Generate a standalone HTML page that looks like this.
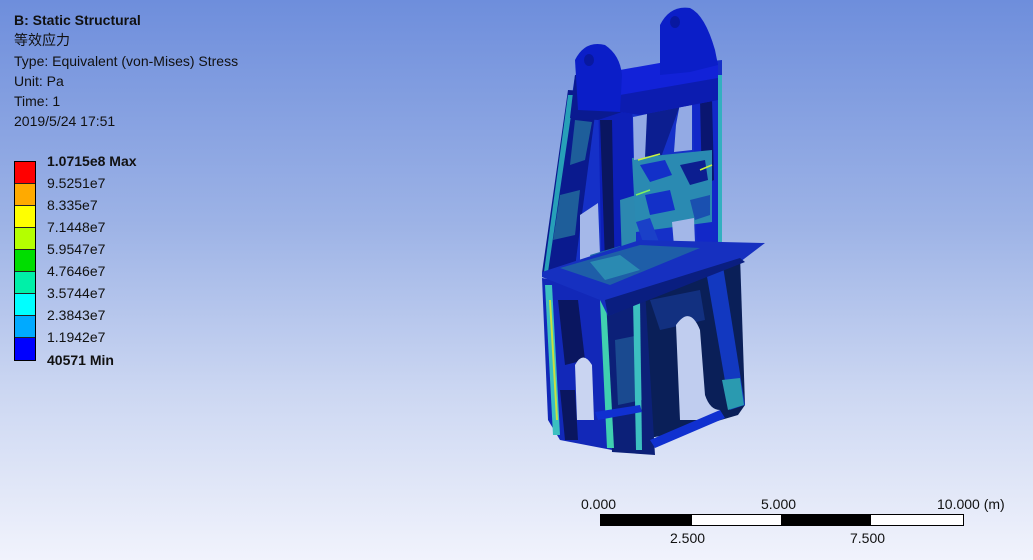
<!DOCTYPE html>
<html><head><meta charset="utf-8"><style>
html,body{margin:0;padding:0}
body{width:1033px;height:560px;overflow:hidden;position:relative;
background:linear-gradient(to bottom,#6e8edc 0%,#9db3e6 40%,#ccd7f2 70%,#f1f3fc 100%);
font-family:"Liberation Sans","Noto Sans CJK SC",sans-serif;font-size:14px;color:#111}
.t{position:absolute;left:14px;white-space:nowrap;line-height:20px}
.b{font-weight:bold}
.leg{position:absolute;left:14px;top:161px;width:20px;border:1px solid #000}
.leg div{height:22px;border-bottom:1px solid #222;box-sizing:border-box}
.l{position:absolute;left:47px;white-space:nowrap;line-height:20px}
.s{position:absolute;font-size:14px;white-space:nowrap}
</style></head><body>
<div class="t b" style="top:10px">B: Static Structural</div>
<div class="t" style="top:30px">等效应力</div>
<div class="t" style="top:51px">Type: Equivalent (von-Mises) Stress</div>
<div class="t" style="top:71px">Unit: Pa</div>
<div class="t" style="top:91px">Time: 1</div>
<div class="t" style="top:111px">2019/5/24 17:51</div>
<div class="leg">
<div style="background:#ff0000"></div><div style="background:#ffaa00"></div><div style="background:#ffff00"></div><div style="background:#b4ff00"></div><div style="background:#00dd00"></div><div style="background:#00f0a8"></div><div style="background:#00ffff"></div><div style="background:#00aaff"></div><div style="background:#0000ff;border:none"></div>
</div>
<div class="l b" style="top:151px">1.0715e8 Max</div>
<div class="l" style="top:173px">9.5251e7</div>
<div class="l" style="top:195px">8.335e7</div>
<div class="l" style="top:217px">7.1448e7</div>
<div class="l" style="top:239px">5.9547e7</div>
<div class="l" style="top:261px">4.7646e7</div>
<div class="l" style="top:283px">3.5744e7</div>
<div class="l" style="top:305px">2.3843e7</div>
<div class="l" style="top:327px">1.1942e7</div>
<div class="l b" style="top:350px">40571 Min</div>

<svg style="position:absolute;left:0;top:0" width="1033" height="560">
<!-- upper frame base -->
<polygon points="575,75 722,60 722,250 700,255 635,290 545,278" fill="#1530c8"/>
<!-- left outer leg -->
<polygon points="568,90 598,92 574,275 542,273" fill="#0a1a8e"/>
<polygon points="575,120 592,122 585,160 570,165" fill="#1e5e9a"/>
<polygon points="560,195 580,190 575,235 553,240" fill="#1e5e9a"/>
<polygon points="568,95 574,95 548,272 544,272" fill="#27a0b8"/>
<!-- left inner leg -->
<polygon points="598,92 632,95 636,290 602,290" fill="#0d1fb8"/>
<polygon points="600,120 612,120 615,290 606,290" fill="#0a1660"/>
<polygon points="620,200 636,195 636,260 622,262" fill="#2c88b0"/>
<!-- right posts -->
<polygon points="692,80 720,75 722,250 697,250" fill="#1228c8"/>
<polygon points="700,100 712,98 714,180 702,185" fill="#0a1670"/>
<polygon points="718,75 722,75 722,245 718,245" fill="#33b0c0"/>
<polygon points="645,110 682,100 660,160 645,165" fill="#0c1e90"/>
<!-- middle cross structure -->
<polygon points="632,158 712,150 712,222 636,232" fill="#2a8ab2"/>
<polygon points="640,165 665,160 672,175 650,182" fill="#1330c8"/>
<polygon points="680,165 705,160 708,180 690,185" fill="#0c1e90"/>
<polygon points="645,195 670,190 675,210 650,215" fill="#1330c8"/>
<polygon points="690,200 710,195 710,215 695,220" fill="#1a50b0"/>
<!-- openings upper (drawn over) -->
<polygon points="633,117 647,114 645,158 634,160" fill="#93aae4"/>
<polygon points="681,98 692,96 692,150 674,152 676,125" fill="#93aae4"/>
<polygon points="672,222 694,218 695,243 674,246" fill="#a3b7e8"/>
<polygon points="580,215 598,203 600,255 580,260" fill="#a5b8e9"/>
<polygon points="590,255 620,246 628,262 595,270" fill="#1e6aa5"/>
<polyline points="638,160 660,154" stroke="#c8f040" stroke-width="1.5" fill="none"/>
<polyline points="700,170 712,165" stroke="#c8f040" stroke-width="1.5" fill="none"/>
<polyline points="636,195 650,190" stroke="#80f060" stroke-width="1.5" fill="none"/>
<!-- diagonal brace -->
<polygon points="636,222 650,218 665,258 650,262" fill="#1a40c8"/>
<!-- lower back -->
<polygon points="640,295 740,255 745,405 738,415 680,432 640,440" fill="#0a1f58"/>
<polygon points="650,300 700,290 705,320 660,330" fill="#123080"/>
<polygon points="705,265 722,260 745,405 730,410" fill="#1238c0"/>
<polygon points="722,380 740,378 744,405 728,410" fill="#2a9ab0"/>
<path d="M680,420 L676,325 Q690,305 700,330 L705,395 Q710,410 720,410 L720,420 Z" fill="#c0cdef"/>
<!-- lower front legs -->
<polygon points="542,278 605,290 612,450 560,440 548,420" fill="#1228b8"/>
<polygon points="558,300 578,300 585,360 565,365" fill="#0a1660"/>
<polygon points="560,390 575,390 578,440 565,440" fill="#0a1660"/>
<polygon points="605,300 645,290 655,455 612,452" fill="#0c2078"/>
<polygon points="615,340 640,335 642,400 618,405" fill="#1a4a90"/>
<polygon points="545,285 552,285 560,435 553,435" fill="#3cc0c0"/>
<polygon points="549,300 551,300 558,420 556,420" fill="#c8e040"/>
<polygon points="600,300 606,300 614,448 607,448" fill="#40d0b0"/>
<polygon points="633,300 640,300 642,450 636,450" fill="#3cc0c0"/>
<path d="M577,420 L575,365 Q583,350 592,365 L594,420 Z" fill="#c9d4f1"/>
<!-- bottom bars -->
<polygon points="595,412 640,405 642,412 598,420" fill="#1030d0"/>
<polygon points="650,440 720,410 725,418 655,448" fill="#1030d0"/>
<!-- flange -->
<polygon points="542,272 640,240 765,243 740,262 608,316 600,300 542,277" fill="#1630c0"/>
<polygon points="605,300 740,258 745,262 608,316" fill="#0a1e80"/>
<polygon points="560,268 640,245 700,248 610,285" fill="#1e5ea8"/>
<polygon points="590,262 620,255 640,270 605,280" fill="#2a8ab2"/>
<!-- top lugs & crossbar -->
<polygon points="575,75 622,75 622,112 598,120 570,118" fill="#0a1a90"/>
<polygon points="620,70 705,55 718,62 718,100 640,115 620,112" fill="#1222d8"/>
<polygon points="620,95 718,78 718,100 640,115 620,112" fill="#0c1cb0"/>
<path d="M578,110 L575,60 Q585,40 605,45 Q620,55 622,75 L620,112 Z" fill="#0b1ec8"/>
<path d="M660,75 L660,25 Q670,5 690,8 Q705,15 715,50 L718,65 L690,72 Z" fill="#0b1ec8"/>
<ellipse cx="589" cy="60" rx="5" ry="6" fill="#0818a0"/>
<ellipse cx="675" cy="22" rx="5" ry="6" fill="#0818a0"/>
</svg>

<div class="s" style="left:581px;top:496px">0.000</div>
<div class="s" style="left:761px;top:496px">5.000</div>
<div class="s" style="left:937px;top:496px">10.000 (m)</div>
<div style="position:absolute;left:600px;top:514px;width:362px;height:10px;border:1px solid #000;background:#fff"></div>
<div style="position:absolute;left:601px;top:515px;width:91px;height:10px;background:#000"></div>
<div style="position:absolute;left:781px;top:515px;width:90px;height:10px;background:#000"></div>
<div class="s" style="left:670px;top:530px">2.500</div>
<div class="s" style="left:850px;top:530px">7.500</div>
</body></html>
